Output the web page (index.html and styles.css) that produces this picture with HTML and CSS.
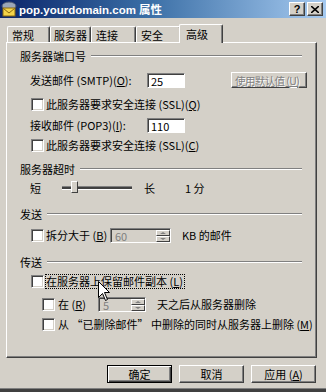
FILE: index.html
```html
<!DOCTYPE html>
<html lang="zh-CN">
<head>
  <meta charset="UTF-8">
  <title>pop.yourdomain.com 属性</title>
  <link rel="stylesheet" href="styles.css">
</head>
<body>
  <div class="window">
    <div class="titlebar">
      <svg class="title-icon" width="16" height="16" viewBox="0 0 16 16">
        <ellipse cx="8" cy="5" rx="7" ry="4" fill="#9aa6b8" stroke="#4a5670" stroke-width="1"/>
        <rect x="2" y="7" width="12" height="8" fill="#f4d44a" stroke="#8a6a10" stroke-width="1"/>
        <path d="M2.5 7.5 L8 12 L13.5 7.5" fill="none" stroke="#8a6a10" stroke-width="1"/>
      </svg>
      <span class="title-text">pop.yourdomain.com 属性</span>
      <div class="title-btns">
        <span class="tbtn">?</span>
        <span class="tbtn">
          <svg width="8" height="7" viewBox="0 0 8 7"><path d="M0 0 L8 7 M8 0 L0 7" stroke="#000" stroke-width="1.6"/></svg>
        </span>
      </div>
    </div>

    <div class="tabs">
      <div class="tab w43">常规</div>
      <div class="tab w41">服务器</div>
      <div class="tab w45">连接</div>
      <div class="tab w45">安全</div>
      <div class="tab active">高级</div>
    </div>

    <div class="panel">
      <div class="legend">服务器端口号</div>
      <div class="row mt8">
        <span class="label">发送邮件 (SMTP)(<u>O</u>):</span>
        <span class="field">25</span>
        <span class="btn disabled">使用默认值 (<u>U</u>)</span>
      </div>
      <div class="row mt8">
        <span class="check"></span>
        <span>此服务器要求安全连接 (SSL)(<u>Q</u>)</span>
      </div>
      <div class="row mt5">
        <span class="label">接收邮件 (POP3)(<u>I</u>):</span>
        <span class="field">110</span>
      </div>
      <div class="row mt4">
        <span class="check"></span>
        <span>此服务器要求安全连接 (SSL)(<u>C</u>)</span>
      </div>

      <div class="legend mt8">服务器超时</div>
      <div class="row mt3">
        <span class="short">短</span>
        <span class="slider"><span class="thumb"></span></span>
        <span class="long">长</span>
        <span class="minutes">1 分</span>
      </div>

      <div class="legend mt10">发送</div>
      <div class="row mt5">
        <span class="check"></span>
        <span class="split-text">拆分大于 (<u>B</u>)</span>
        <span class="spin w61">
          <span class="spin-val">60</span>
          <span class="spin-btns"><span class="up"></span><span class="down"></span></span>
        </span>
        <span class="after">KB 的邮件</span>
      </div>

      <div class="legend mt11">传送</div>
      <div class="row mt3">
        <span class="check"></span>
        <span class="focus">在服务器上保留邮件副本 (<u>L</u>)</span>
      </div>
      <div class="row sub mt7">
        <span class="check"></span>
        <span class="days-text">在 (<u>R</u>)</span>
        <span class="spin w48">
          <span class="spin-val">5</span>
          <span class="spin-btns"><span class="up"></span><span class="down"></span></span>
        </span>
        <span class="after">天之后从服务器删除</span>
      </div>
      <div class="row sub mt4">
        <span class="check"></span>
        <span>从 “已删除邮件” 中删除的同时从服务器上删除 (<u>M</u>)</span>
      </div>

      <svg class="cursor" width="13" height="21" viewBox="0 0 13 21">
        <path d="M0.5 0.5 L0.5 16.5 L4.5 12.5 L7.5 19.5 L9.5 18.5 L6.5 11.5 L11.5 11.5 Z" fill="#fff" stroke="#000" stroke-width="1"/>
      </svg>
    </div>

    <div class="buttons">
      <span class="btn default">确定</span>
      <span class="btn">取消</span>
      <span class="btn">应用 (<u>A</u>)</span>
    </div>
  </div>
</body>
</html>
```

FILE: styles.css
```css
html,
body {
  margin: 0;
  padding: 0;
}

body {
  width: 326px;
  height: 392px;
  overflow: hidden;
  background: #d4d0c8;
  font-family: "Noto Sans CJK SC", "Liberation Sans", sans-serif;
  font-size: 11px;
  color: #000;
}

.window {
  height: 392px;
  box-sizing: border-box;
  border-bottom: 3px solid #404040;
  box-shadow: inset 0 -1px #808080;
}

/* title bar */
.titlebar {
  height: 18px;
  display: flex;
  align-items: center;
  background: linear-gradient(to right, #0a246a, #3a6ea5 45%, #a6caf0);
  padding: 0 3px 0 1px;
}

.title-icon {
  flex: none;
  margin-right: 2px;
}

.title-text {
  font-family: "Liberation Sans", "Noto Sans CJK SC", sans-serif;
  font-weight: bold;
  font-size: 11.5px;
  color: #fff;
  flex: 1;
}

.title-btns {
  display: flex;
  gap: 2px;
}

.tbtn {
  width: 14px;
  height: 12px;
  display: flex;
  align-items: center;
  justify-content: center;
  background: #d4d0c8;
  border: 1px solid;
  border-color: #fff #404040 #404040 #fff;
  box-shadow: inset -1px -1px #808080;
  font-family: "Liberation Sans", sans-serif;
  font-weight: bold;
  font-size: 11px;
  line-height: 1;
}

/* tabs */
.tabs {
  height: 24px;
  display: flex;
  align-items: flex-end;
  padding-left: 7px;
}

.tab {
  height: 16px;
  box-sizing: border-box;
  padding: 1px 0 0 4px;
  border: 1px solid;
  border-color: #fff #404040 transparent #fff;
  border-bottom: none;
  border-radius: 2px 2px 0 0;
  box-shadow: inset -1px 0 #808080;
  line-height: 14px;
  white-space: nowrap;
}

.w43 { width: 43px; }
.w41 { width: 41px; padding-left: 3px; }
.w45 { width: 45px; }

.tab.active {
  position: relative;
  z-index: 1;
  width: 44px;
  height: 19px;
  margin: 0 -2px -1px;
  padding: 2px 0 0 6px;
  background: #d4d0c8;
}

/* panel */
.panel {
  position: relative;
  height: 316px;
  width: 311px;
  margin-left: 6px;
  box-sizing: border-box;
  border: 1px solid;
  border-color: #fff #404040 #404040 #fff;
  box-shadow: inset -1px -1px #808080;
  padding: 5px 14px 0 13px;
}

.legend {
  display: flex;
  align-items: center;
  height: 16px;
  white-space: nowrap;
}

.legend::after {
  content: "";
  flex: 1;
  border-top: 1px solid #808080;
  border-bottom: 1px solid #fff;
  margin-left: 5px;
}

.row {
  display: flex;
  align-items: center;
  height: 16px;
  padding-left: 10px;
  white-space: nowrap;
}

.row.sub {
  padding-left: 21px;
}

.mt3 { margin-top: 3px; }
.mt4 { margin-top: 4px; }
.mt5 { margin-top: 5px; }
.mt7 { margin-top: 7px; }
.mt8 { margin-top: 8px; }
.mt10 { margin-top: 10px; }
.mt11 { margin-top: 11px; }

.label {
  width: 117px;
}

.field {
  width: 38px;
  height: 15px;
  box-sizing: border-box;
  background: #fff;
  border: 1px solid;
  border-color: #808080 #fff #fff #808080;
  box-shadow: inset 1px 1px #404040;
  padding: 1px 0 0 3px;
  line-height: 12px;
}

.check {
  flex: none;
  width: 13px;
  height: 13px;
  box-sizing: border-box;
  background: #fff;
  border: 1px solid;
  border-color: #808080 #fff #fff #808080;
  box-shadow: inset 1px 1px #404040, inset -1px -1px #d4d0c8;
  margin: 0 2px 0 1px;
}

.row.sub .check {
  margin-right: 3px;
}

/* buttons */
.btn {
  width: 65px;
  height: 18px;
  box-sizing: border-box;
  display: flex;
  align-items: center;
  justify-content: center;
  background: #d4d0c8;
  border: 1px solid;
  border-color: #fff #404040 #404040 #fff;
  box-shadow: inset -1px -1px #808080;
  white-space: nowrap;
}

.btn.disabled {
  width: 76px;
  height: 16px;
  margin-left: auto;
  margin-right: -5px;
  justify-content: flex-start;
  padding-left: 3px;
  font-size: 10.5px;
  letter-spacing: -0.6px;
  color: #808080;
  text-shadow: 1px 1px #fff;
}

.btn.default {
  border: 1px solid #000;
  box-shadow: inset 1px 1px #fff, inset -1px -1px #404040, inset -2px -2px #808080;
}

.buttons {
  display: flex;
  justify-content: flex-end;
  gap: 7px;
  padding: 7px 10px 0 0;
}

/* slider */
.short {
  width: 32px;
}

.slider {
  position: relative;
  width: 70px;
  height: 2px;
  border-top: 1px solid #808080;
  border-bottom: 1px solid #fff;
  background: #404040;
}

.thumb {
  position: absolute;
  left: 9px;
  top: -6px;
  width: 5px;
  height: 10px;
  background: #d4d0c8;
  border: 1px solid;
  border-color: #fff #404040 #404040 #fff;
}

.long {
  margin-left: 12px;
  width: 41px;
}

/* spin boxes */
.split-text {
  width: 64px;
}

.days-text {
  width: 40px;
}

.spin {
  display: flex;
  height: 15px;
  box-sizing: border-box;
  border: 1px solid;
  border-color: #808080 #fff #fff #808080;
  box-shadow: inset 1px 1px #404040;
  background: #d4d0c8;
}

.w61 { width: 61px; }
.w48 { width: 48px; }

.spin-val {
  flex: 1;
  color: #808080;
  padding: 1px 0 0 4px;
  line-height: 12px;
}

.spin-btns {
  display: flex;
  flex-direction: column;
  width: 14px;
  margin-top: 1px;
}

.spin-btns span {
  flex: 1;
  display: flex;
  align-items: center;
  justify-content: center;
  box-sizing: border-box;
  border: 1px solid;
  border-color: #fff #404040 #404040 #fff;
}

.spin-btns .up::before,
.spin-btns .down::before {
  content: "";
  border-left: 3px solid transparent;
  border-right: 3px solid transparent;
}

.spin-btns .up::before {
  border-bottom: 2px solid #808080;
}

.spin-btns .down::before {
  border-top: 2px solid #808080;
}

.after {
  margin-left: 11px;
}

.focus {
  outline: 1px dotted #000;
  outline-offset: 0;
  padding: 0 1px 0 0;
  line-height: 13px;
}

.cursor {
  position: absolute;
  left: 91px;
  top: 238px;
}
```
